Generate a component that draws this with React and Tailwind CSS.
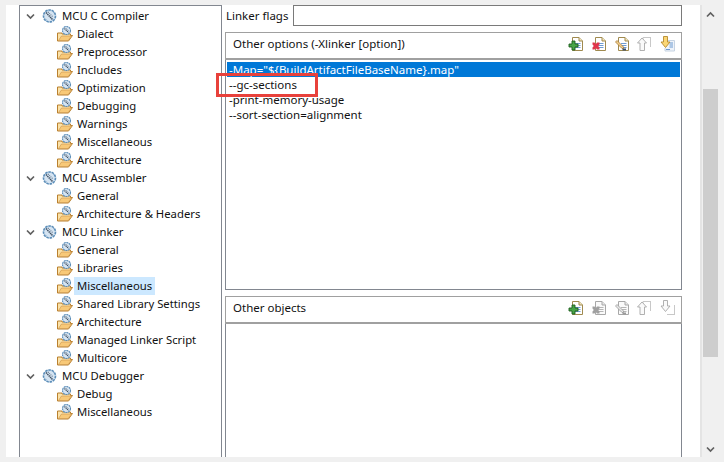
import React from 'react';

const tree = [
  { label: 'MCU C Compiler', items: ['Dialect', 'Preprocessor', 'Includes', 'Optimization', 'Debugging', 'Warnings', 'Miscellaneous', 'Architecture'] },
  { label: 'MCU Assembler', items: ['General', 'Architecture & Headers'] },
  { label: 'MCU Linker', items: ['General', 'Libraries', 'Miscellaneous', 'Shared Library Settings', 'Architecture', 'Managed Linker Script', 'Multicore'] },
  { label: 'MCU Debugger', items: ['Debug', 'Miscellaneous'] },
];

const GlobeIcon = () => (
  <svg width="16" height="16" viewBox="0 0 16 16" className="shrink-0">
    <circle cx="7.5" cy="8" r="6" fill="#d5e4f2" stroke="#5b8db8" strokeWidth="1.6" strokeDasharray="2.5 0.8" />
    <path d="M4 4.5l6.5 7" stroke="#3f4e60" strokeWidth="1.5" strokeDasharray="1.4 0.6" />
    <path d="M6 4l4.5 4.5" stroke="#5f7287" strokeWidth="1.1" strokeDasharray="1 0.8" />
    <path d="M3 10.5l2 2M10.5 3.5l1.5 1.5" stroke="#8fb0ce" strokeWidth="1" />
  </svg>
);

const FolderIcon = () => (
  <svg width="16" height="16" viewBox="0 0 16 16" className="shrink-0">
    <path d="M0.5 7V15H11.5L15.5 9.5H13.5V8H5V7Z" fill="#fbe2a8" stroke="#b9802f" strokeWidth="1" />
    <path d="M1.5 14.5L4.5 10H14.5L11 14.5Z" fill="#f8c978" stroke="#c9924a" strokeWidth="0.6" />
    <circle cx="9.5" cy="4.5" r="4" fill="#d5e4f2" stroke="#5b8db8" strokeWidth="1.1" strokeDasharray="2 0.6" />
    <path d="M7.5 2.5l4 4" stroke="#3f4e60" strokeWidth="1.3" strokeDasharray="1.2 0.6" />
    <path d="M9.5 2.5l2.5 2.5" stroke="#5f7287" strokeWidth="0.9" strokeDasharray="1 0.8" />
  </svg>
);

const Doc = ({ gray }) => (
  <>
    <path d="M4.5 1.5H11L14.5 5V14.5H4.5Z" fill={gray ? '#fafafa' : '#ffffff'} stroke={gray ? '#a8a8a8' : '#a08a4f'} />
    <path d="M11 1.5V5H14.5" fill={gray ? '#e8e8e8' : '#f3e6bd'} stroke={gray ? '#a8a8a8' : '#a08a4f'} />
    <path d="M7 7.5H12.5M7 9.5H12.5M7 11.5H12.5" stroke={gray ? '#b5b5b5' : '#6d9bd1'} />
  </>
);

const AddIcon = () => (
  <svg width="16" height="16" viewBox="0 0 16 16">
    <Doc />
    <path d="M4 5V8H1V11H4V14H7V11H10V8H7V5Z" fill="#47a447" stroke="#1d5f1d" strokeWidth="0.9" />
  </svg>
);

const DeleteIcon = ({ gray }) => (
  <svg width="16" height="16" viewBox="0 0 16 16">
    <Doc gray={gray} />
    <path d="M1.5 6.5L3.5 6.5L4.8 8L6 6.5H8.5V8.5L7.2 10L8.5 11.5V13.5H6L4.8 12L3.5 13.5H1.5V11.5L2.8 10L1.5 8.5Z" fill={gray ? '#a0a0a0' : '#e0354b'} />
  </svg>
);

const EditIcon = ({ gray }) => (
  <svg width="16" height="16" viewBox="0 0 16 16">
    <Doc gray={gray} />
    <path d="M1.5 6L3 4.5L9.5 11L9.5 12.5L8 12.5Z" fill={gray ? '#e6e6e6' : '#f2cf8b'} stroke={gray ? '#9a9a9a' : '#a67a3a'} strokeWidth="0.8" />
    <rect x="8.5" y="12.5" width="3.5" height="2" fill={gray ? '#9a9a9a' : '#3b4f68'} />
  </svg>
);

const UpIcon = () => (
  <svg width="16" height="16" viewBox="0 0 16 16">
    <path d="M6 1.5H13.5M13.5 1V11" stroke="#c8c8c8" fill="none" />
    <path d="M6 1.5V5" stroke="#c8c8c8" />
    <path d="M5 2L9.5 7H7.5V14.5H3V7H0.5Z" fill="#fafafa" stroke="#a8a8a8" strokeWidth="0.9" />
  </svg>
);

const DownIcon = ({ gray }) => (
  <svg width="16" height="16" viewBox="0 0 16 16">
    {gray ? (
      <path d="M14.5 5V15M7 14.5H14.5" stroke="#c8c8c8" fill="none" />
    ) : (
      <>
        <path d="M8 4.5H14.5V15H5V12" fill="#eef3fa" stroke="#c6d3e2" />
        <path d="M9.5 7H13M9.5 9H13M9.5 11H13M6 13.5H10" stroke="#6d9bd1" />
      </>
    )}
    <path d="M3.5 0.5H7.5V6H10L5.5 11.5L1 6H3.5Z" fill={gray ? '#fafafa' : '#fbd776'} stroke={gray ? '#a8a8a8' : '#b68a2e'} strokeWidth="0.9" />
  </svg>
);

const Chevron = ({ up }) => (
  <svg width="9" height="7" viewBox="0 0 9 7">
    <path d={up ? 'M1 5.5L4.5 2L8 5.5' : 'M1 1.5L4.5 5L8 1.5'} fill="none" stroke="#606060" strokeWidth="1.7" />
  </svg>
);

const GroupHeader = ({ title, disabled }) => (
  <div className="h-[28px] shrink-0 flex items-center pl-[7px] pr-[5px] pb-[4px] border border-[#a0a0a0] border-b-2">
    <span className="flex-1">{title}</span>
    <div className="flex gap-[7px] pt-[1px]">
      <AddIcon />
      <DeleteIcon gray={disabled} />
      <EditIcon gray={disabled} />
      <UpIcon />
      <DownIcon gray={disabled} />
    </div>
  </div>
);

export default function App() {
  return (
    <div className="relative w-[724px] h-[462px] bg-[#f0f0f0] flex pt-[5px] pb-[5px] pl-[6px] overflow-hidden text-[11.5px] text-[#111] font-['Noto_Sans','Open_Sans',sans-serif]">
      <div className="w-[694px] bg-white flex pl-[13px]">
        <div className="w-[203px] border-x border-t border-[#828790] pt-[1px] pl-[6px] text-[11.3px]">
          {tree.map((group) => (
            <div key={group.label}>
              <div className="h-[18px] flex items-center">
                <span className="w-[16px] flex justify-start"><Chevron /></span>
                <GlobeIcon />
                <span className="ml-[4px]">{group.label}</span>
              </div>
              {group.items.map((item) => {
                const selected = group.label === 'MCU Linker' && item === 'Miscellaneous';
                return (
                  <div key={item} className="h-[18px] flex items-center pl-[31px]">
                    <FolderIcon />
                    <span className={selected ? 'ml-[1px] pl-[3px] pr-[3px] h-[18px] leading-[18px] bg-[#cce8ff]' : 'ml-[4px]'}>{item}</span>
                  </div>
                );
              })}
            </div>
          ))}
        </div>

        <div className="w-[457px] ml-[3px] flex flex-col">
          <div className="h-[21px] flex items-center shrink-0">
            <span className="w-[68px] pl-[1px]">Linker flags</span>
            <div className="flex-1 h-full border border-[#7a7a7a]" />
          </div>

          <div className="mt-[6px] h-[258px] shrink-0 flex flex-col">
            <GroupHeader title="Other options (-Xlinker [option])" />
            <div className="flex-1 border-x border-b border-[#828790] pt-[2px] px-[1px] leading-[15px]">
              <div className="h-[15px] bg-[#0078d7] text-white pl-[2px]">-Map="${'{'}BuildArtifactFileBaseName{'}'}.map"</div>
              <div className="pl-[2px]">--gc-sections</div>
              <div className="pl-[2px]">-print-memory-usage</div>
              <div className="pl-[2px]">--sort-section=alignment</div>
            </div>
          </div>

          <div className="mt-[6px] flex-1 flex flex-col">
            <GroupHeader title="Other objects" disabled />
            <div className="flex-1 border-x border-[#828790]" />
          </div>
        </div>
      </div>

      <div className="w-[3px] flex">
        <div className="w-[2px] bg-[#e4e4e4]" />
      </div>
      <div className="w-[15px] -mt-[5px] -mb-[5px] flex flex-col items-center">
        <div className="h-[18px] mt-[5px] flex items-center"><Chevron up /></div>
        <div className="mt-[66px] w-full h-[268px] bg-[#cdcdcd]" />
        <div className="flex-1" />
        <div className="h-[18px] mb-[4px] flex items-center"><Chevron /></div>
      </div>

      <div className="absolute left-[216px] top-[73px] w-[102px] h-[24px] border-[3px] border-[#e8413b]" />
    </div>
  );
}
